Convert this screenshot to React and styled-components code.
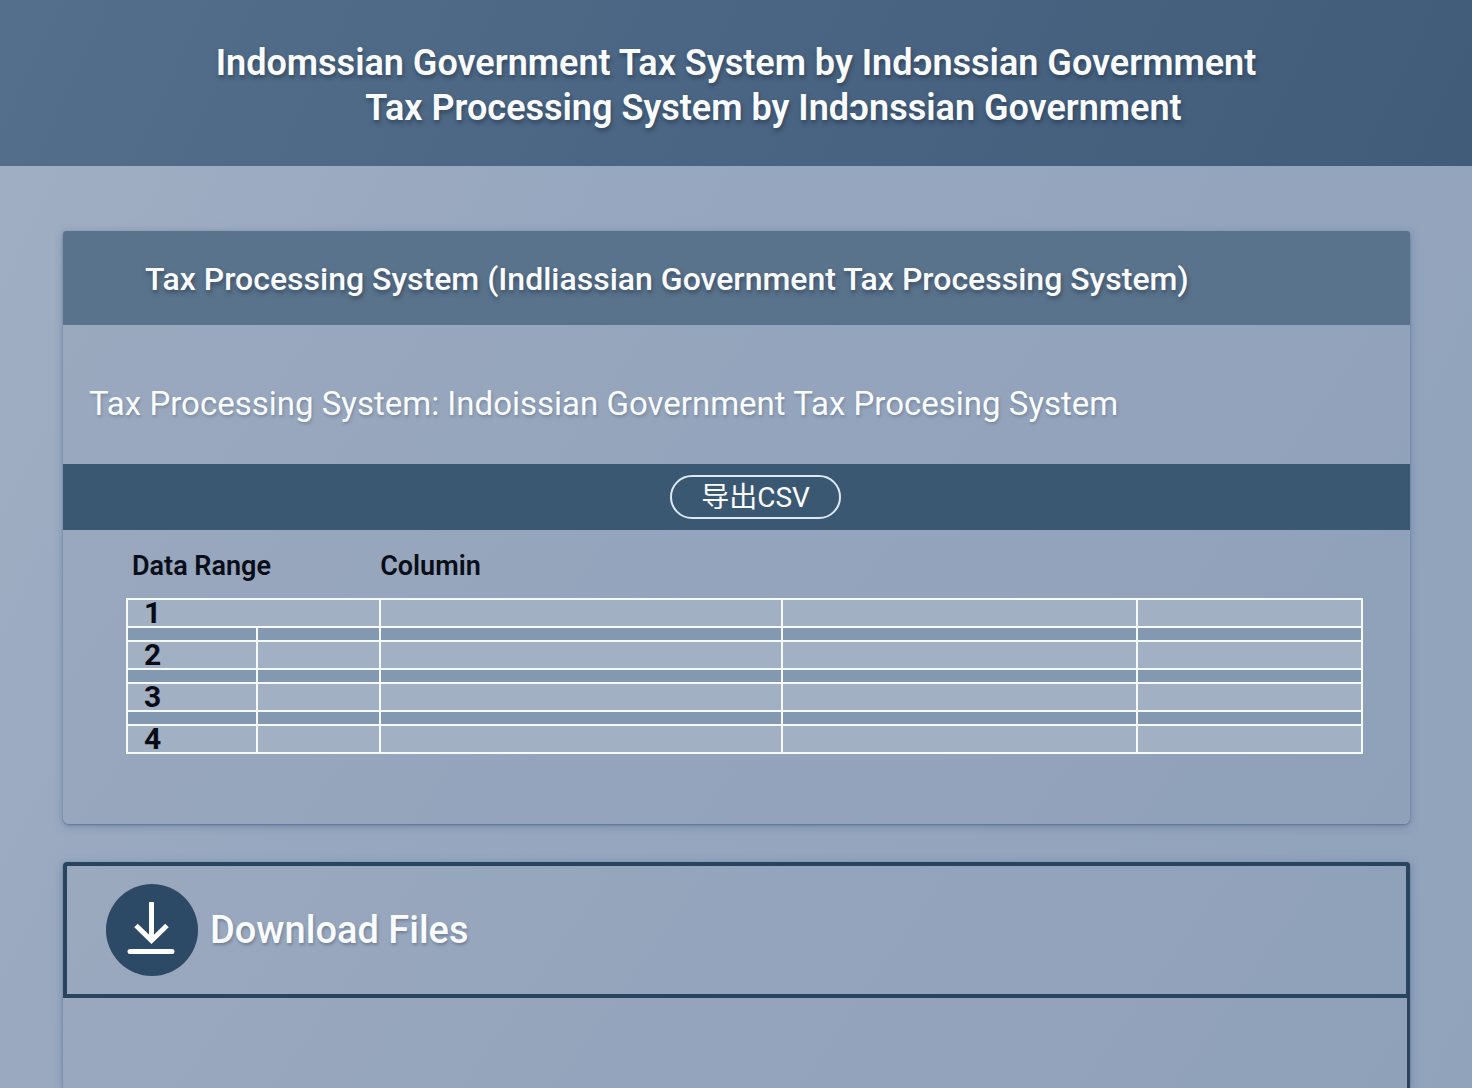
import React from "react";
import styled, { createGlobalStyle } from "styled-components";

const GlobalStyle = createGlobalStyle`
  *, *::before, *::after { box-sizing: border-box; }
  html, body { margin: 0; }
  body {
    font-family: Roboto, "Liberation Sans", "Noto Sans CJK SC", sans-serif;
    color: #fafcff;
  }
`;

const Page = styled.div`
  min-height: 100vh;
  display: flex;
  flex-direction: column;
  background: linear-gradient(115deg, #a1afc3 0%, #97a7bf 35%, #91a2bb 100%);
`;

const Banner = styled.header`
  padding: 41px 24px 35px;
  background: linear-gradient(115deg, #546f8b 0%, #4a6583 50%, #405c79 100%);
`;

const BannerTitle = styled.h1`
  margin: 0;
  text-align: center;
  font-size: 36px;
  line-height: 45px;
  font-weight: 600;
  text-shadow: 1px 3px 4px rgba(24, 40, 60, 0.5);
`;

const TitleLine = styled.span`
  display: block;
  padding-left: ${(p) => p.$indent || 0}px;
`;

const Main = styled.main`
  flex: 1;
  display: flex;
  flex-direction: column;
  gap: 38px;
  padding: 65px 62px 0 63px;
`;

const Card = styled.section`
  border-radius: 3px 3px 6px 6px;
  background: linear-gradient(125deg, #9aa9be 0%, #94a4bc 50%, #8fa1b9 100%);
  box-shadow: 0 1px 2px rgba(70, 95, 130, 0.6), 0 2px 8px rgba(80, 105, 150, 0.5);
`;

const CardTitle = styled.h2`
  margin: 0;
  padding: 25px 24px 23px 82px;
  border-radius: 3px 3px 0 0;
  background: #5a738c;
  font-size: 32px;
  line-height: 46px;
  font-weight: 500;
  text-shadow: 1px 3px 4px rgba(24, 40, 60, 0.5);
`;

const Lead = styled.p`
  margin: 0;
  padding: 56px 24px 37px 26px;
  font-size: 33px;
  line-height: 46px;
  text-shadow: 1px 2px 3px rgba(50, 70, 100, 0.3);
`;

const Toolbar = styled.div`
  display: flex;
  justify-content: center;
  padding: 11px 0 11px 38px;
  background: #3b5873;
`;

const ExportButton = styled.button`
  height: 44px;
  padding: 1px 29px 0;
  border: 2px solid #dde8f3;
  border-radius: 22px;
  background: transparent;
  color: inherit;
  font: inherit;
  font-size: 28px;
  line-height: 40px;
  cursor: pointer;
`;

const CardBody = styled.div`
  padding: 0 47px 70px 63px;
`;

const RangeTable = styled.table`
  width: 100%;
  table-layout: fixed;
  border-collapse: collapse;
`;

const HeadCell = styled.th`
  height: 69px;
  padding: 3px 0 0 ${(p) => p.$inset || 0}px;
  text-align: left;
  color: #090e18;
  font-size: 27px;
  line-height: 32px;
  font-weight: 600;
`;

const Cell = styled.td`
  height: 28px;
  padding: 0;
  border: 2px solid #f6faff;
  background: #a2b0c3;
`;

const NumberCell = styled.th`
  height: 28px;
  padding: 0 0 0 16px;
  border: 2px solid #f6faff;
  background: #a2b0c3;
  text-align: left;
  color: #070b16;
  font-size: 30px;
  line-height: 26px;
  font-weight: 700;
`;

const BandCell = styled.td`
  height: 14px;
  padding: 0;
  border: 2px solid #f6faff;
  background: #8399b1;
`;

const FilesCard = styled(Card)`
  flex: 1;
  border-radius: 4px 4px 0 0;
  border-right: 3px solid #2a4560;
`;

const FilesHeader = styled.div`
  display: flex;
  align-items: center;
  gap: 12px;
  height: 136px;
  margin-right: -3px;
  padding: 0 39px;
  border: 4px solid #28445e;
  border-radius: 4px 4px 0 0;
`;

const DownloadButton = styled.button`
  width: 92px;
  height: 92px;
  padding: 0;
  border: 0;
  border-radius: 50%;
  background: #2c4965;
  cursor: pointer;
`;

const FilesTitle = styled.h2`
  margin: 0;
  font-size: 38px;
  line-height: 46px;
  font-weight: 500;
  text-shadow: 1px 2px 3px rgba(50, 70, 100, 0.4);
`;

function DownloadIcon() {
  return (
    <svg width="92" height="92" viewBox="0 0 92 92" fill="none" aria-hidden="true">
      <path d="M45.5 18v39" stroke="#fff" strokeWidth="5" />
      <path d="M30 41.5 45.5 56.5l15.500-15" stroke="#fff" strokeWidth="5" />
      <path d="M24 67.500h42" stroke="#fff" strokeWidth="5" strokeLinecap="round" />
    </svg>
  );
}

const rows = [1, 2, 3, 4];

export default function App() {
  return (
    <>
      <GlobalStyle />
      <Page>
        <Banner>
          <BannerTitle>
            <TitleLine>Indomssian Government Tax System by Indɔnssian Govermment</TitleLine>
            <TitleLine $indent={75}>Tax Processing System by Indɔnssian Government</TitleLine>
          </BannerTitle>
        </Banner>
        <Main>
          <Card>
            <CardTitle>Tax Processing System (Indliassian Government Tax Processing System)</CardTitle>
            <Lead>Tax Processing System: Indoissian Government Tax Procesing System</Lead>
            <Toolbar>
              <ExportButton type="button">导出CSV</ExportButton>
            </Toolbar>
            <CardBody>
              <RangeTable>
                <colgroup>
                  <col style={{ width: "10.5%" }} />
                  <col style={{ width: "10%" }} />
                  <col style={{ width: "32.5%" }} />
                  <col style={{ width: "28.8%" }} />
                  <col />
                </colgroup>
                <thead>
                  <tr>
                    <HeadCell scope="col" colSpan={2} $inset={5}>Data Range</HeadCell>
                    <HeadCell scope="col" colSpan={3}>Columin</HeadCell>
                  </tr>
                </thead>
                <tbody>
                  {rows.map((n, i) => (
                    <React.Fragment key={n}>
                      {i > 0 && (
                        <tr>
                          <BandCell /><BandCell /><BandCell /><BandCell /><BandCell />
                        </tr>
                      )}
                      <tr>
                        <NumberCell scope="row" colSpan={i === 0 ? 2 : 1}>{n}</NumberCell>
                        {i > 0 && <Cell />}
                        <Cell /><Cell /><Cell />
                      </tr>
                    </React.Fragment>
                  ))}
                </tbody>
              </RangeTable>
            </CardBody>
          </Card>
          <FilesCard>
            <FilesHeader>
              <DownloadButton type="button" aria-label="Download files">
                <DownloadIcon />
              </DownloadButton>
              <FilesTitle>Download Files</FilesTitle>
            </FilesHeader>
          </FilesCard>
        </Main>
      </Page>
    </>
  );
}
